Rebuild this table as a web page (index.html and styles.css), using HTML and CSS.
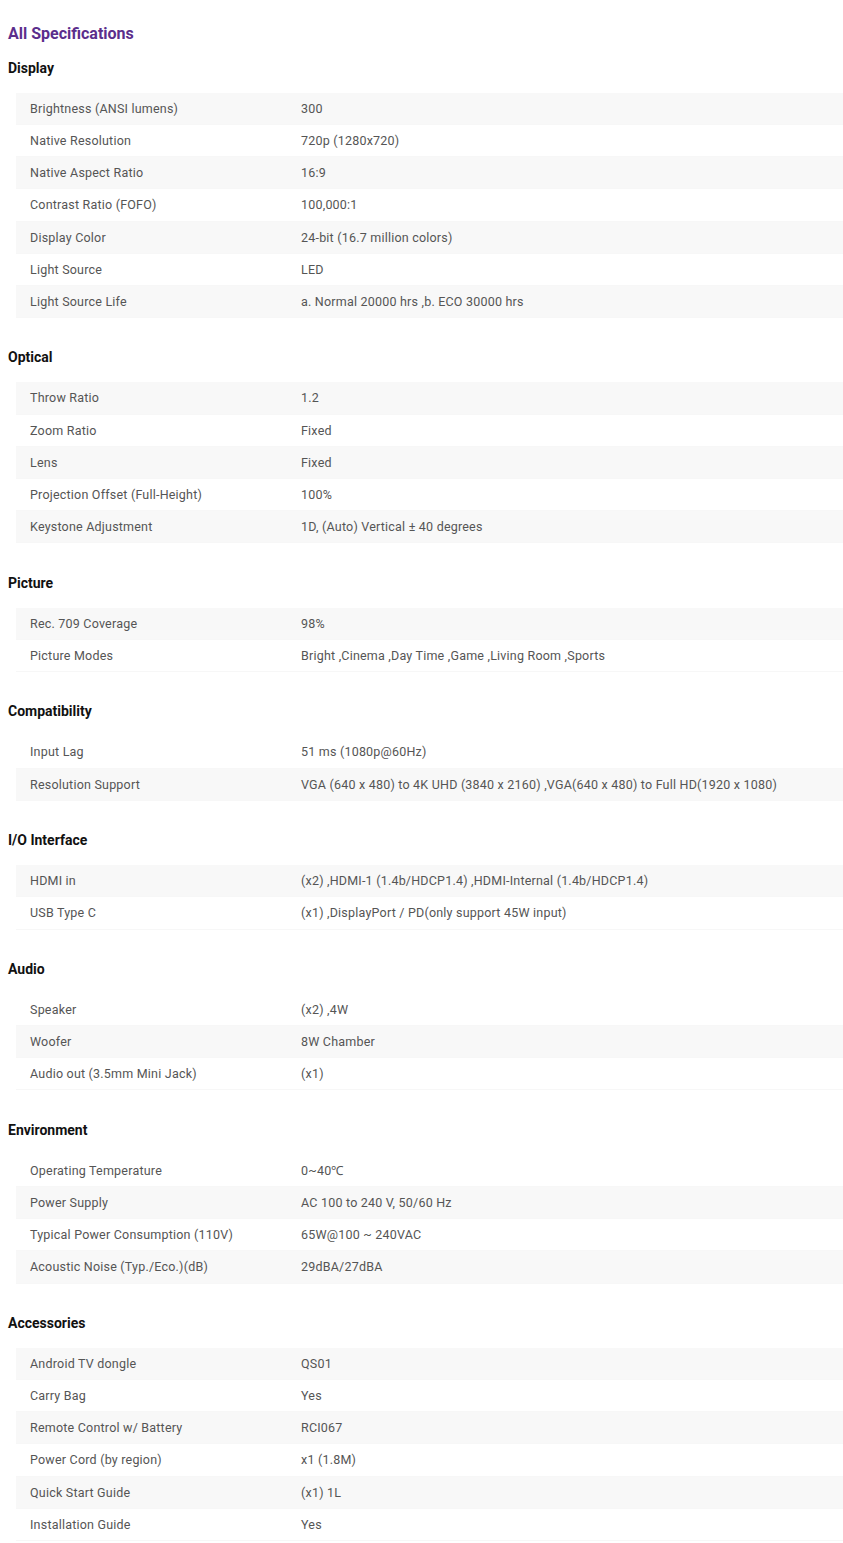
FILE: index.html
```html
<!DOCTYPE html>
<html>
  <head>
    <title>All Specifications</title>
    <link rel="stylesheet" href="styles.css">
  </head>
  <body>
    <h2 class="title">All Specifications</h2>

    <h3>Display</h3>
    <table class="specs">
      <tr class="shade"><td>Brightness (ANSI lumens)</td><td>300</td></tr>
      <tr><td>Native Resolution</td><td>720p (1280x720)</td></tr>
      <tr class="shade"><td>Native Aspect Ratio</td><td>16:9</td></tr>
      <tr><td>Contrast Ratio (FOFO)</td><td>100,000:1</td></tr>
      <tr class="shade"><td>Display Color</td><td>24-bit (16.7 million colors)</td></tr>
      <tr><td>Light Source</td><td>LED</td></tr>
      <tr class="shade"><td>Light Source Life</td><td>a. Normal 20000 hrs ,b. ECO 30000 hrs</td></tr>
    </table>

    <h3>Optical</h3>
    <table class="specs">
      <tr class="shade"><td>Throw Ratio</td><td>1.2</td></tr>
      <tr><td>Zoom Ratio</td><td>Fixed</td></tr>
      <tr class="shade"><td>Lens</td><td>Fixed</td></tr>
      <tr><td>Projection Offset (Full-Height)</td><td>100%</td></tr>
      <tr class="shade"><td>Keystone Adjustment</td><td>1D, (Auto) Vertical ± 40 degrees</td></tr>
    </table>

    <h3>Picture</h3>
    <table class="specs">
      <tr class="shade"><td>Rec. 709 Coverage</td><td>98%</td></tr>
      <tr><td>Picture Modes</td><td>Bright ,Cinema ,Day Time ,Game ,Living Room ,Sports</td></tr>
    </table>

    <h3>Compatibility</h3>
    <table class="specs">
      <tr><td>Input Lag</td><td>51 ms (1080p@60Hz)</td></tr>
      <tr class="shade"><td>Resolution Support</td><td>VGA (640 x 480) to 4K UHD (3840 x 2160) ,VGA(640 x 480) to Full HD(1920 x 1080)</td></tr>
    </table>

    <h3>I/O Interface</h3>
    <table class="specs">
      <tr class="shade"><td>HDMI in</td><td>(x2) ,HDMI-1 (1.4b/HDCP1.4) ,HDMI-Internal (1.4b/HDCP1.4)</td></tr>
      <tr><td>USB Type C</td><td>(x1) ,DisplayPort / PD(only support 45W input)</td></tr>
    </table>

    <h3>Audio</h3>
    <table class="specs">
      <tr><td>Speaker</td><td>(x2) ,4W</td></tr>
      <tr class="shade"><td>Woofer</td><td>8W Chamber</td></tr>
      <tr><td>Audio out (3.5mm Mini Jack)</td><td>(x1)</td></tr>
    </table>

    <h3>Environment</h3>
    <table class="specs">
      <tr><td>Operating Temperature</td><td>0~40℃</td></tr>
      <tr class="shade"><td>Power Supply</td><td>AC 100 to 240 V, 50/60 Hz</td></tr>
      <tr><td>Typical Power Consumption (110V)</td><td>65W@100 ~ 240VAC</td></tr>
      <tr class="shade"><td>Acoustic Noise (Typ./Eco.)(dB)</td><td>29dBA/27dBA</td></tr>
    </table>

    <h3>Accessories</h3>
    <table class="specs">
      <tr class="shade"><td>Android TV dongle</td><td>QS01</td></tr>
      <tr><td>Carry Bag</td><td>Yes</td></tr>
      <tr class="shade"><td>Remote Control w/ Battery</td><td>RCI067</td></tr>
      <tr><td>Power Cord (by region)</td><td>x1 (1.8M)</td></tr>
      <tr class="shade"><td>Quick Start Guide</td><td>(x1) 1L</td></tr>
      <tr><td>Installation Guide</td><td>Yes</td></tr>
    </table>
  </body>
</html>
```

FILE: styles.css
```css
body {
  font-family: Roboto, "Liberation Sans", Arial, sans-serif;
  margin: 0;
  padding: 23px 0 0 8px;
  background: #fff;
}
.title {
  margin: 0;
  font-size: 16px;
  line-height: 22px;
  font-weight: bold;
  color: #5b2e8c;
}
h3 {
  margin: 0;
  font-size: 14px;
  line-height: 20px;
  font-weight: bold;
  color: #111;
}
.title + h3 {
  margin-top: 13px;
}
.specs + h3 {
  margin-top: 29.5px;
}
.specs {
  width: calc(100% - 8px);
  margin: 15px 0 0 8px;
  border-collapse: collapse;
  font-size: 12.5px;
  color: #555;
  letter-spacing: 0.21px;
}
.specs td {
  padding: 7px 14px;
  line-height: 17.14px;
  border-bottom: 1px solid #f7f7f7;
  vertical-align: middle;
}
.specs td:first-child {
  width: 243px;
}
.specs tr.shade {
  background-color: #f8f8f8;
}
```
